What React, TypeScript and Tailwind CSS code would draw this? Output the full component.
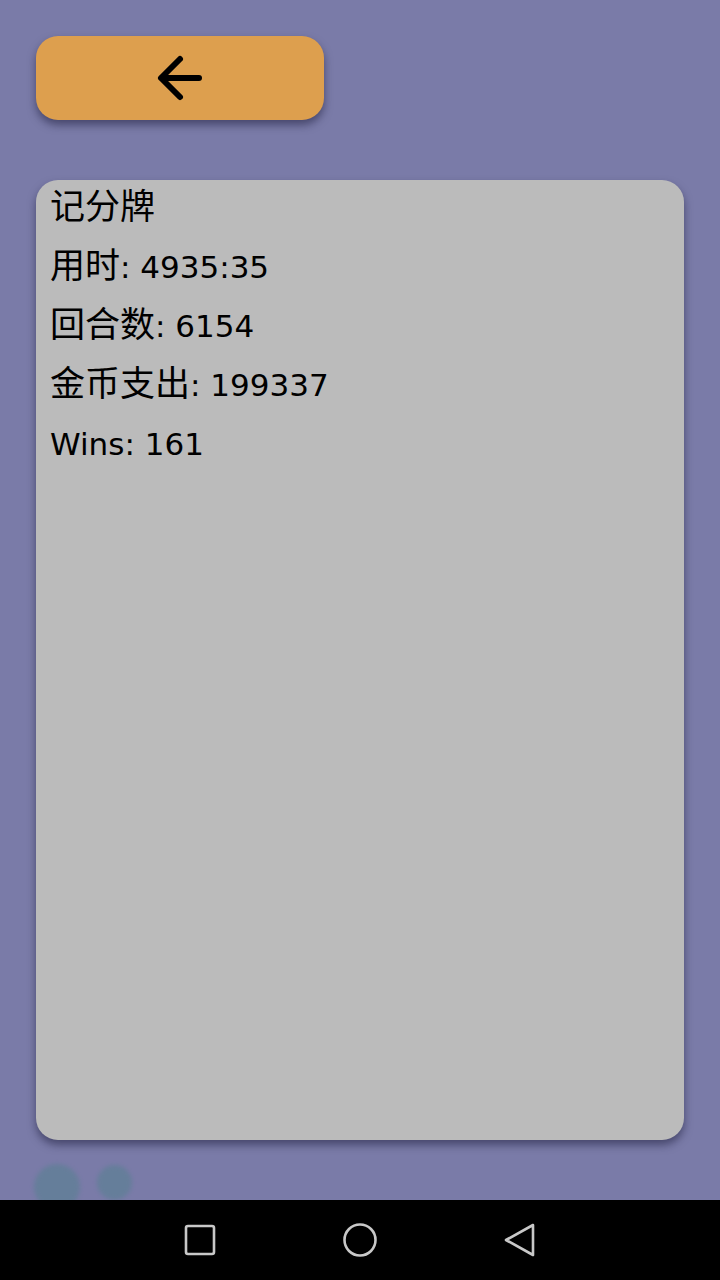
import React from "react";

function Zh({ children }: { children: React.ReactNode }) {
  return <span className="text-[35px] leading-none">{children}</span>;
}

export default function App() {
  return (
    <div
      className="w-[720px] h-[1280px] flex flex-col bg-[#7a7ba8] overflow-hidden"
      style={{ fontFamily: '"DejaVu Sans", "Noto Sans CJK SC", sans-serif' }}
    >
      <div className="flex-1 flex flex-col px-[36px] pt-[36px] relative">
        <button className="w-[288px] h-[84px] rounded-[22px] bg-[#dd9f4e] shadow-[0_5px_8px_rgba(30,30,60,0.55)] flex items-center justify-center">
          <svg width="48" height="48" viewBox="0 0 48 48" fill="none" stroke="#000" strokeWidth="6" strokeLinecap="round" strokeLinejoin="round" className="block">
            <path d="M43 24H6" />
            <path d="M24 5L5 24L24 43" />
          </svg>
        </button>
        <div className="mt-[60px] h-[960px] rounded-[22px] bg-[#bbbbbb] shadow-[0_5px_8px_rgba(30,30,60,0.55)] px-[14px] text-black text-[31px] leading-[59px]">
          <div className="-mt-[1px]">
            <div><Zh>记分牌</Zh></div>
            <div><Zh>用时</Zh>: 4935:35</div>
            <div><Zh>回合数</Zh>: 6154</div>
            <div><Zh>金币支出</Zh>: 199337</div>
            <div>Wins: 161</div>
          </div>
        </div>
        <div className="absolute left-[34px] top-[1164px] w-[46px] h-[46px] rounded-full bg-[#5f7f96] blur-[2px] opacity-75" />
        <div className="absolute left-[97px] top-[1165px] w-[35px] h-[35px] rounded-full bg-[#5f7f96] blur-[2px] opacity-75" />
      </div>
      <div className="h-[80px] bg-black flex items-center justify-center relative z-10">
        <div className="flex items-center">
          <div className="w-[160px] flex justify-center">
            <svg width="32" height="32" viewBox="0 0 32 32" fill="none" stroke="#c8c8c8" strokeWidth="2.6">
              <rect x="2" y="2" width="28" height="28" rx="2" />
            </svg>
          </div>
          <div className="w-[160px] flex justify-center">
            <svg width="36" height="36" viewBox="0 0 36 36" fill="none" stroke="#c8c8c8" strokeWidth="2.6">
              <circle cx="18" cy="18" r="15.5" />
            </svg>
          </div>
          <div className="w-[160px] flex justify-center">
            <svg width="34" height="36" viewBox="0 0 34 36" fill="none" stroke="#c8c8c8" strokeWidth="2.6" strokeLinejoin="round">
              <path d="M30 3L3 18L30 33Z" />
            </svg>
          </div>
        </div>
      </div>
    </div>
  );
}
